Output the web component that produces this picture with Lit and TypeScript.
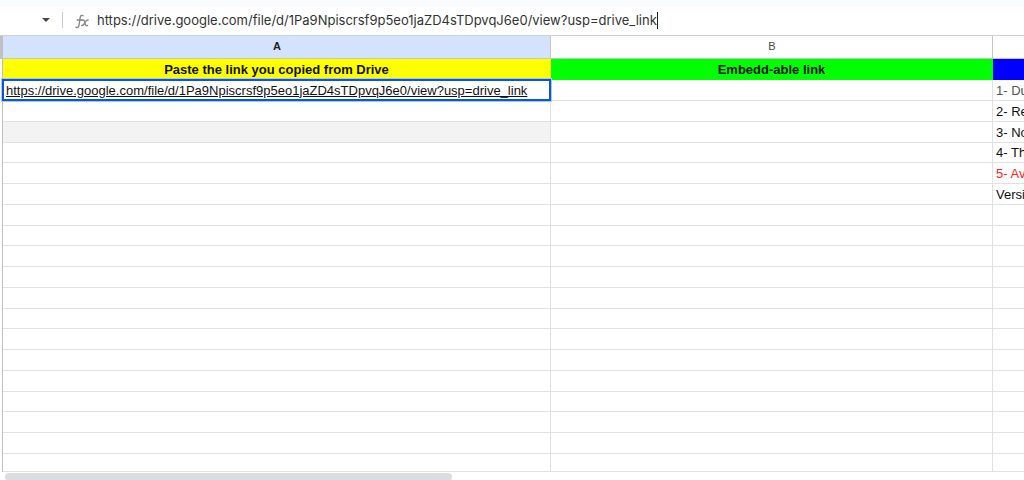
import { LitElement, html, css } from "lit";
import { customElement, state } from "lit/decorators.js";
import { classMap } from "lit/directives/class-map.js";

const NOTES = [
  { text: "1- Du", tone: "muted" },
  { text: "2- Re", tone: "" },
  { text: "3- No", tone: "" },
  { text: "4- Th", tone: "" },
  { text: "5- Av", tone: "alert" },
  { text: "Versi", tone: "" },
];

const BLANK_ROWS = 13;

@customElement("formula-bar")
export class FormulaBar extends LitElement {
  static properties = { value: { type: String } };
  declare value: string;

  static styles = css`
    :host {
      display: block;
      background: #fff;
      border-top: 7px solid #f9fbfd;
      border-bottom: 1px solid #d0d0d0;
    }
    .bar {
      display: flex;
      align-items: center;
      box-sizing: border-box;
      height: 28px;
      padding: 0 0 2px 38px;
    }
    .names {
      display: flex;
      padding: 4px;
      border: 0;
      background: none;
    }
    .rule {
      width: 1px;
      height: 16px;
      margin: 0 12px 0 8px;
      background: #c7c9d3;
    }
    .fx {
      margin: 2px 8px 0 0;
    }
    .input {
      field-sizing: content;
      padding: 0;
      border: 0;
      outline: 0;
      background: none;
      color: #333;
      font: 13px/18px Inter, sans-serif;
    }
    .caret {
      width: 1px;
      height: 17px;
      background: #222;
    }
    svg {
      display: block;
    }
  `;

  render() {
    return html`
      <div class="bar">
        <button class="names" aria-label="Named ranges">
          <svg width="8" height="4" viewBox="0 0 8 4"><path d="M0 0h8L4 4z" fill="#444746" /></svg>
        </button>
        <span class="rule"></span>
        <svg class="fx" width="14" height="15" viewBox="0 0 14 15" fill="none" stroke="#858789" stroke-width="1.4" stroke-linecap="round">
          <path d="M8 1.700C6.300.9 5.500 1.800 5.200 3.500L4 11.200C3.700 13 2.800 14 1 13.300M2.200 6h5" />
          <path d="M7.300 6.200c1.300-.8 2 .3 2.300 1.400l.8 2.900c.4 1.300 1.200 1.600 2.200.9M13.100 6c-1.600-.3-2.500 1.400-3.300 2.700-.8 1.400-1.600 3.100-3.200 2.700" />
        </svg>
        <input class="input" aria-label="Formula" .value=${this.value} />
        <span class="caret"></span>
      </div>
    `;
  }
}

@customElement("app-root")
export class AppRoot extends LitElement {
  @state() link =
    "https://drive.google.com/file/d/1Pa9Npiscrsf9p5eo1jaZD4sTDpvqJ6e0/view?usp=drive_link";

  static styles = css`
    :host {
      display: flex;
      flex-direction: column;
      height: 100vh;
      overflow: hidden;
      background: #fff;
      color: #111;
      font: 13px/18px "Liberation Sans", Arial, sans-serif;
    }
    .grid {
      padding-left: 2px;
      background: linear-gradient(#c0c0c0, #c0c0c0) 0 0 / 2px 23px no-repeat;
    }
    .sheet {
      width: 100%;
      table-layout: fixed;
      border-spacing: 0;
      border-left: 1px solid #c0c0c0;
    }
    .col-a {
      width: 548px;
    }
    .col-b {
      width: 442px;
    }
    th,
    td {
      box-sizing: border-box;
      height: 21px;
      padding: 1px 3px 0;
      border-right: 1px solid #e1e1e1;
      border-bottom: 1px solid #e1e1e1;
      text-align: left;
      white-space: nowrap;
      overflow: hidden;
    }
    th:last-child,
    td:last-child {
      padding-right: 0;
      border-right: 0;
    }
    .letters th {
      height: 23px;
      padding: 0 2px 2px 3px;
      border-color: #c4c7c5;
      color: #444746;
      font-size: 11px;
      font-weight: 400;
      text-align: center;
    }
    .letters .picked {
      background: #d3e3fd;
      color: #1f1f1f;
      font-weight: 700;
    }
    .titles th {
      border-color: transparent;
      text-align: center;
      color: #111;
    }
    .titles .yellow {
      background: #ff0;
    }
    .titles .green {
      background: #0f0;
    }
    .titles .blue {
      background: #00f;
    }
    tbody tr:nth-child(4n + 5) td {
      height: 20px;
    }
    tbody tr:last-child td {
      height: 18px;
      padding: 0;
    }
    td.active {
      position: relative;
      overflow: visible;
    }
    .active::after {
      content: "";
      position: absolute;
      inset: -1px;
      border: 2px solid #0b57d0;
      box-shadow: 0 0 0 1px #a8c7fa;
      pointer-events: none;
    }
    .link {
      color: inherit;
      text-decoration: underline;
    }
    .shade {
      background: #f3f3f3;
    }
    .muted {
      color: #555;
    }
    .alert {
      color: #f22;
    }
    .scroll {
      padding: 1px 0 0 5px;
    }
    .thumb {
      width: 45%;
      max-width: 447px;
      height: 8px;
      border-radius: 4px;
      background: #dadce0;
    }
  `;

  render() {
    return html`
      <formula-bar .value=${this.link}></formula-bar>
      <div class="grid">
        <table class="sheet">
          <colgroup>
            <col class="col-a" />
            <col class="col-b" />
            <col />
          </colgroup>
          <thead>
            <tr class="letters">
              <th class="picked">A</th>
              <th>B</th>
              <th></th>
            </tr>
          </thead>
          <tbody>
            <tr class="titles">
              <th class="yellow">Paste the link you copied from Drive</th>
              <th class="green">Embedd-able link</th>
              <th class="blue"></th>
            </tr>
            ${NOTES.map(
              (note, i) => html`
                <tr>
                  <td class=${classMap({ active: i === 0, shade: i === 2 })}>
                    ${i === 0 ? html`<a class="link" href=${this.link}>${this.link}</a>` : ""}
                  </td>
                  <td></td>
                  <td class=${note.tone}>${note.text}</td>
                </tr>
              `
            )}
            ${Array.from({ length: BLANK_ROWS }, () => html`<tr><td></td><td></td><td></td></tr>`)}
          </tbody>
        </table>
      </div>
      <div class="scroll"><div class="thumb"></div></div>
    `;
  }
}
